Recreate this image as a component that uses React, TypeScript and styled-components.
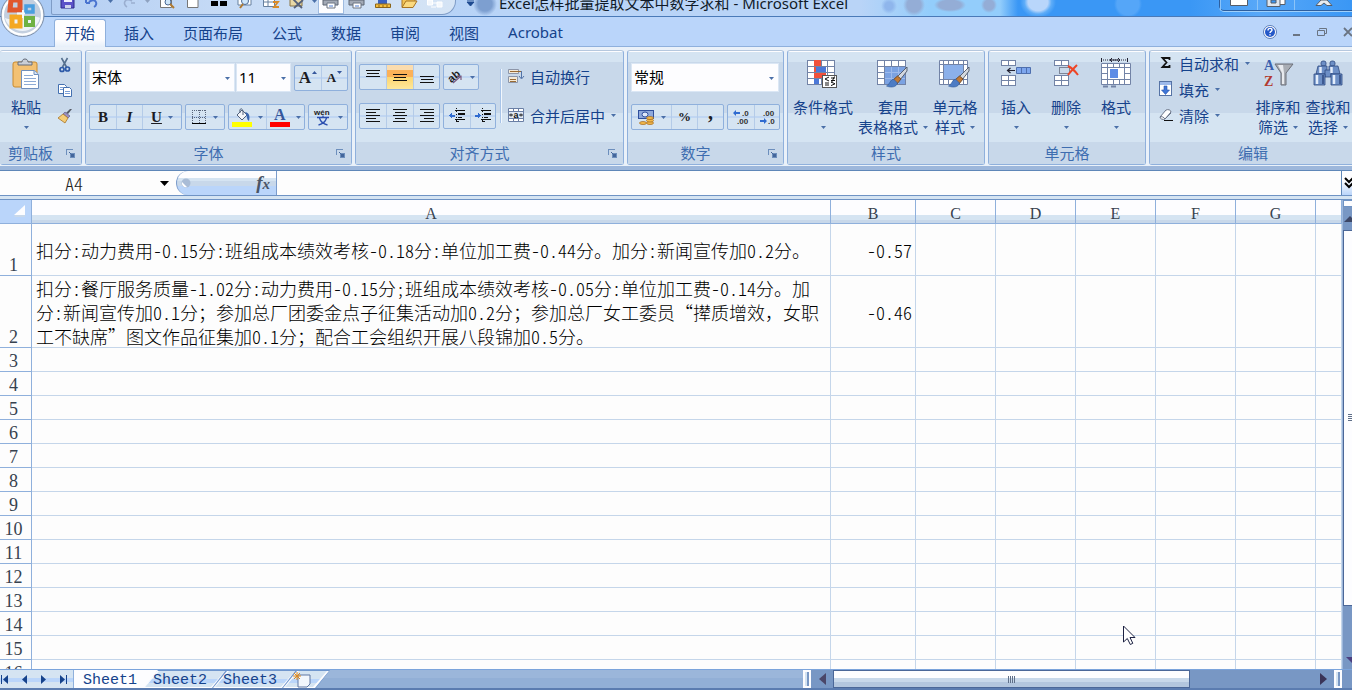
import React from "react";
import styled, { createGlobalStyle, css } from "styled-components";

const ui = `"Noto Sans", "Noto Sans CJK SC", sans-serif`;
const song = `"Noto Sans CJK SC", sans-serif`;
const navy = "#15428b";
const line = "#8fb0dc";
const light = "#d5e4f2";
const mid = "#c8d8ea";

const Global = createGlobalStyle`
  * { box-sizing: border-box; }
  html, body { margin: 0; }
  body { font-family: ${ui}; font-size: 15px; color: ${navy}; }
  button, select, input { font: inherit; color: inherit; margin: 0; padding: 0; border: 0; background: none; border-radius: 0; }
  svg { display: block; flex: none; overflow: visible; }
`;

const Window = styled.div`
  height: 100vh;
  display: flex;
  flex-direction: column;
  overflow: hidden;
  position: relative;
  background: ${light};
`;

/* ---------- title bar ---------- */
const TitleBar = styled.header`
  flex: none;
  height: 17px;
  padding-left: 51px;
  display: flex;
  align-items: flex-start;
  overflow: hidden;
  border-bottom: 1px solid #4a7ab8;
  background:
    radial-gradient(circle at 889px 6px, #8fb6ec 4px, transparent 8px),
    radial-gradient(circle at 914px 5px, #94add6 7px, transparent 11px),
    radial-gradient(ellipse 16px 7px at 950px 5px, #94add6 70%, transparent),
    radial-gradient(circle at 989px 5px, #94add6 5px, transparent 8px),
    radial-gradient(ellipse 18px 16px at 1038px 2px, #b9d6fb 55%, #5fadf8 75%, transparent),
    radial-gradient(circle at 1128px 4px, #55a6f8 11px, transparent 14px),
    radial-gradient(circle at 485px 4px, #7d9fd0 7px, transparent 12px),
    linear-gradient(90deg, #a9c9f3 0, #b9d4f7 500px, #b9d4f7 860px, #93cdfb 930px, #93cdfb 1000px, #3a97f5 1018px, #3a97f5 1190px, #58a8f8 1260px, #3a97f5 100%);
`;

const QuickAccess = styled.div`
  flex: none;
  width: 405px;
  height: 15px;
  padding-left: 2px;
  display: flex;
  border: 1px solid #7f9cc6;
  border-top: 0;
  border-radius: 0 0 14px 2px;
  background: linear-gradient(90deg, #b5cff3, #c8dcf6 50%, #d5e4f5);
`;

const QuickButton = styled.button<{ $w?: number; $on?: boolean }>`
  flex: none;
  width: ${(p) => p.$w ?? 26}px;
  height: 14px;
  display: flex;
  justify-content: center;
  align-items: flex-start;
  ${(p) => p.$on && css`background: #fdfdff; border: 1px solid #9fbbe0; border-top: 0;`}
`;

const MoreButton = styled.button`
  width: 28px;
  height: 14px;
  display: flex;
  justify-content: center;
`;

const DocTitle = styled.h1`
  margin: 0 0 0 15px;
  flex: 1;
  height: 16px;
  display: flex;
  align-items: flex-end;
  font-size: 15px;
  line-height: 26px;
  font-weight: 400;
  color: #101a28;
  white-space: nowrap;
`;

const WindowButtons = styled.div`
  flex: none;
  width: 133px;
  height: 11px;
  display: flex;
  border: 1px solid #2d5f9f;
  border-top: 0;
  border-right: 0;
  border-radius: 0 0 0 5px;
  box-shadow: 0 1px 0 #9fd0fb;
`;

const WindowButton = styled.button<{ $wide?: boolean }>`
  flex: ${(p) => (p.$wide ? 1 : "none")};
  width: 37px;
  display: flex;
  justify-content: center;
  border-left: 1px solid #8cc4f8;
`;

const Orb = styled.button`
  position: absolute;
  left: 0;
  top: 0;
  height: 38px;
  overflow: hidden;
`;

/* ---------- ribbon tabs ---------- */
const TabRow = styled.nav`
  flex: none;
  height: 30px;
  padding-left: 54px;
  display: flex;
  align-items: flex-end;
  background: #bad5fa;
  border-bottom: 1px solid ${line};
`;

const Tab = styled.button<{ $on?: boolean }>`
  height: 28px;
  padding: 0 10px 3px;
  margin-right: 7px;
  margin-bottom: -1px;
  border: 1px solid transparent;
  border-bottom: 0;
  border-radius: 3px 3px 0 0;
  white-space: nowrap;
  ${(p) => p.$on && css`background: linear-gradient(#fdfdff 70%, #e6eff9); border-color: ${line};`}
`;

const TabTools = styled.div`
  flex: 1;
  height: 28px;
  margin-right: -3px;
  display: flex;
  justify-content: flex-end;
  align-items: center;
  gap: 12px;
`;

const Tool = styled.button`
  width: 14px;
  height: 14px;
  display: flex;
  justify-content: center;
  align-items: center;
`;

/* ---------- ribbon ---------- */
const Ribbon = styled.section`
  flex: none;
  height: 119px;
  padding-top: 3px;
  display: flex;
  gap: 3px;
  background: #eaf1f9;
`;

const Group = styled.section<{ $w: number; $first?: boolean }>`
  flex: none;
  width: ${(p) => p.$w}px;
  height: 115px;
  display: flex;
  flex-direction: column;
  border: 1px solid ${line};
  border-left-width: ${(p) => (p.$first ? 0 : 1)}px;
  border-top-color: #b6c8de;
  border-radius: 3px;
  background: linear-gradient(#fdfdff 0 1px, ${light} 1px 11px, ${mid} 11px 62px, ${light} 62px);
`;

const GroupBody = styled.div<{ $pad?: string; $gap?: number; $column?: boolean }>`
  flex: 1;
  min-height: 0;
  display: flex;
  flex-direction: ${(p) => (p.$column ? "column" : "row")};
  gap: ${(p) => p.$gap ?? 0}px;
  padding: ${(p) => p.$pad ?? "6px 2px 0"};
`;

const GroupFoot = styled.footer`
  height: 22px;
  display: flex;
  align-items: center;
  background: ${mid};
  color: #3e6db0;
`;

const GroupName = styled.span`
  flex: 1;
  text-align: center;
  line-height: 22px;
`;

const Launcher = styled.button`
  width: 20px;
  height: 18px;
  padding-left: 5px;
`;

const Line = styled.div<{ $gap?: number; $h?: number }>`
  display: flex;
  align-items: center;
  gap: ${(p) => p.$gap ?? 4}px;
  height: ${(p) => (p.$h ? p.$h + "px" : "auto")};
`;

const Stack = styled.div<{ $gap?: number }>`
  display: flex;
  flex-direction: column;
  gap: ${(p) => p.$gap ?? 0}px;
`;

const Small = styled.button<{ $w?: number; $on?: boolean }>`
  width: ${(p) => p.$w ?? 26}px;
  display: flex;
  align-items: center;
  justify-content: center;
  gap: 6px;
  ${(p) => p.$on && css`background: linear-gradient(#fbdcae 0 5px, #fbb158 5px 12px, #fdd56e 12px, #fde89c);`}
`;

const Cluster = styled.div`
  display: flex;
  height: 26px;
  border: 1px solid ${line};
  border-radius: 2px;
  background: linear-gradient(${light} 0 11px, #c0d6f2 11px 13px, ${light} 13px);
  ${Small} + ${Small} { border-left: 1px solid #b4cbe8; }
`;

const Glyph = styled.span<{ $italic?: boolean; $under?: boolean; $size?: number; $raised?: boolean }>`
  font-family: "Liberation Serif", serif;
  font-weight: 700;
  font-size: ${(p) => p.$size ?? 15}px;
  line-height: 20px;
  padding-bottom: ${(p) => (p.$raised ? 10 : 0)}px;
  color: #1c1c22;
  font-style: ${(p) => (p.$italic ? "italic" : "normal")};
  text-decoration: ${(p) => (p.$under ? "underline" : "none")};
`;

const SizeMark = styled(Small)`
  gap: 1px;
  svg { align-self: flex-start; margin-top: 5px; }
`;

const PickerBox = styled.div<{ $w: number }>`
  position: relative;
  width: ${(p) => p.$w}px;
  height: 29px;
  background: #fdfdff;
  border: 1px solid #dbe7f5;
  select {
    appearance: none;
    width: 100%;
    height: 100%;
    padding: 0 0 2px 2px;
    color: #000;
    outline: 0;
  }
  svg { position: absolute; right: 4px; top: 13px; pointer-events: none; }
`;

const Divider = styled.div`
  width: 1px;
  height: 54px;
  margin: 5px 7px 0 4px;
  background: #a8c4e8;
  box-shadow: 1px 0 0 #f2f7fd;
`;

const TextButton = styled.button`
  height: 26px;
  display: flex;
  align-items: center;
  gap: 6px;
  padding-bottom: 2px;
  white-space: nowrap;
`;

const Big = styled.button<{ $w: number }>`
  flex: none;
  width: ${(p) => p.$w}px;
  height: 84px;
  display: flex;
  flex-direction: column;
  align-items: center;
  line-height: 20px;
  white-space: nowrap;
  > svg:first-child { margin-bottom: 7px; }
`;

const BigSecond = styled.span`
  height: 20px;
  display: flex;
  align-items: center;
  gap: 5px;
`;

/* ---------- formula bar ---------- */
const FormulaBar = styled.div`
  flex: none;
  height: 33px;
  display: flex;
  background: #fdfdfd;
  border-top: 4px solid #9db7db;
  border-bottom: 3px solid ${light};
  box-shadow: inset 0 1px 0 #5f87b8, inset 0 -1px 0 #6f93c4;
`;

const NameBox = styled.input`
  width: 148px;
  height: 26px;
  text-align: center;
  font-family: ${song};
  font-feature-settings: "hwid";
  font-size: 18px;
  font-weight: 300;
  color: #222;
  outline: 0;
`;

const NameArrow = styled.button`
  width: 28px;
  display: flex;
  align-items: center;
  justify-content: center;
  padding-left: 4px;
`;

const FxPill = styled.button`
  width: 101px;
  margin: 1px 0;
  padding: 0 6px 0 4px;
  display: flex;
  align-items: center;
  justify-content: space-between;
  border: 1px solid #7b9ccb;
  border-width: 0 1px 0 1px;
  border-radius: 12px 0 0 12px;
  background: linear-gradient(#fdfdff 0 7px, ${light} 7px 10px, ${mid} 10px 15px, #bad5fa 15px);
  font: italic 700 19px "Liberation Serif", serif;
  color: #4a5566;
  small { font-size: 15px; }
`;

const FormulaInput = styled.input`
  flex: 1;
  min-width: 0;
  height: 26px;
  padding: 0 6px;
  outline: 0;
`;

const Expand = styled.button`
  width: 11px;
  margin: 1px 0;
  overflow: hidden;
  border-left: 1px solid #5f87b8;
  background: linear-gradient(#fdfdff 40%, #bad5fa);
`;

/* ---------- grid ---------- */
const Workspace = styled.main`
  flex: 1;
  min-height: 0;
  display: flex;
  position: relative;
  border-top: 1px solid #6f93c4;
  background: #fdfdfd;
`;

const GridClip = styled.div`
  flex: 1;
  min-width: 0;
  overflow: hidden;
`;

const Grid = styled.table`
  width: 100%;
  table-layout: fixed;
  border-collapse: separate;
  border-spacing: 0;
  font-family: ${song};
  font-size: 18px;
  font-weight: 300;
  color: #000;
`;

const ColHead = styled.th`
  height: 24px;
  padding: 3px 0 0;
  line-height: 19px;
  font-family: "Liberation Serif", serif;
  font-size: 16px;
  font-weight: 400;
  color: #37424f;
  border-right: 1px solid ${line};
  border-bottom: 1px solid ${line};
  background: linear-gradient(#fdfdff 0 15px, ${light} 15px 20px, ${mid} 20px);
`;

const Corner = styled.th`
  padding: 4px 4px 4px 14px;
  background: #bad5fa;
  border-right: 1px solid ${line};
  border-bottom: 1px solid ${line};
`;

const RowHead = styled.th`
  padding: 0 4px 0 0;
  vertical-align: bottom;
  line-height: 20px;
  font-family: "Liberation Serif", serif;
  font-weight: 400;
  color: #37424f;
  border-right: 1px solid ${line};
  border-bottom: 1px solid ${line};
`;

const Cell = styled.td<{ $right?: boolean }>`
  padding: ${(p) => (p.$right ? "0 4px 0 0" : "0 8px 0 4px")};
  text-align: ${(p) => (p.$right ? "right" : "left")};
  line-height: 24px;
  vertical-align: middle;
  word-break: break-all;
  text-spacing-trim: space-all;
  font-feature-settings: "hwid";
  box-shadow: inset -1px -1px 0 #c5d6ea;
`;

/* keeps a full-width comma from being narrowed with the digits around it */
const Wide = styled.span`
  font-feature-settings: normal;
`;

const VScroll = styled.div`
  flex: none;
  width: 10px;
  display: flex;
  flex-direction: column;
  overflow: hidden;
  background: #7897c4;
  border-left: 1px solid #9db7db;
`;

const VSplit = styled.div`
  height: 7px;
  margin-bottom: 1px;
  background: #fdfdff;
  border: 1px solid #6f93c4;
  border-width: 1px 0 1px 1px;
`;

const VThumb = styled.div`
  flex: 1;
  display: flex;
  align-items: center;
  border: 1px solid #4b6798;
  border-right: 0;
  background: #fdfdff;
`;

const ScrollArrow = styled.button<{ $w?: number; $h?: number }>`
  flex: none;
  width: ${(p) => p.$w ?? 12}px;
  height: ${(p) => p.$h ?? 18}px;
  display: flex;
  align-items: center;
  justify-content: center;
`;

const VFiller = styled.div`
  height: 45px;
`;

const Pointer = styled.svg`
  position: absolute;
  left: 83%;
  top: 425px;
`;

/* ---------- sheet tabs ---------- */
const BottomBar = styled.footer`
  flex: none;
  height: 21px;
  display: flex;
  background: linear-gradient(#9bb6da 0 8px, #92afd6 8px);
  border-top: 1px solid #7ba4dc;
  border-bottom: 2px solid #5b7cb0;
`;

const SheetNav = styled.div`
  width: 74px;
  display: flex;
  align-items: center;
  gap: 10px;
  padding-left: 1px;
  background: linear-gradient(${light} 0 8px, #bad5fa 8px 12px, ${light} 12px);
  border-right: 1px solid ${line};
`;

const slant = "polygon(14px 0, 100% 0, calc(100% - 14px) 100%, 0 100%)";

const SheetTab = styled.button<{ $on?: boolean; $w?: number }>`
  position: relative;
  isolation: isolate;
  flex: none;
  width: ${(p) => p.$w ?? 86}px;
  margin-left: ${(p) => (p.$on ? 0 : -16)}px;
  padding: 2px 0 0 ${(p) => (p.$on ? 9 : 11)}px;
  display: flex;
  align-items: center;
  z-index: ${(p) => (p.$on ? 1 : 0)};
  font-family: "Liberation Mono", monospace;
  font-size: 15px;
  background: ${(p) => (p.$on ? "#fdfdff" : "#6f96cd")};
  clip-path: ${(p) => (p.$on ? "polygon(0 0, 100% 0, calc(100% - 14px) 100%, 0 100%)" : slant)};
  ${(p) =>
    !p.$on &&
    css`
      &::before, &::after { content: ""; position: absolute; z-index: -1; clip-path: ${slant}; }
      &::before { inset: 1px 1px 0 1px; background: #fdfdff; }
      &::after { inset: 1px 3px 1px 3px; background: linear-gradient(${light} 0 8px, #bad5fa 8px 12px, ${light} 12px); }
    `}
`;

const HScroll = styled.div`
  width: 549px;
  margin-left: auto;
  display: flex;
  align-items: stretch;
  background: #7897c4;
`;

const Splitter = styled.div`
  width: 8px;
  border: 2px solid #fdfdff;
  background: #7897c4;
  box-shadow: inset 2px 0 0 ${light};
`;

const HTrack = styled.div`
  flex: 1;
  display: flex;
`;

const HThumb = styled.div`
  width: 357px;
  display: flex;
  align-items: center;
  justify-content: center;
  gap: 1px;
  border: 1px solid #4b6798;
  background: linear-gradient(#fdfdff 0 7px, ${mid} 7px 11px, #b3c6de 11px);
  i { width: 1px; height: 7px; background: #5f6f88; }
`;

/* ---------- icons ---------- */
const Caret = ({ color = "#4a6fa8" }: { color?: string }) => (
  <svg width="5" height="3"><path d="M0 0h5L2.500 3z" fill={color} /></svg>
);

const Rows = ({ xs, y = 0 }: { xs: [number, number][]; y?: number }) => (
  <svg width="16" height="16" stroke="#111" strokeWidth="1" shapeRendering="crispEdges">
    {xs.map(([a, b], i) => <path key={i} d={`M${a} ${y + 2.5 + i * 3}H${b}`} />)}
  </svg>
);

const LauncherIcon = () => (
  <svg width="9" height="9" fill="none" stroke="#6d8fbd" shapeRendering="crispEdges">
    <path d="M.5 6V.5H7" /><path d="M4.500 4.500h4v4h-4z" fill="#44669b" /><path d="M3 3l3 3" stroke="#44669b" />
  </svg>
);

const IndentIcon = ({ out }: { out?: boolean }) => (
  <svg width="17" height="16" shapeRendering="crispEdges">
    <path d="M6 2.500h10M9 5.500h7M9 6.500h7M9 9.500h4M6 11.500h10M7 13.500h3" stroke="#111" />
    <path d="M7.500 0v15" stroke="#111" strokeDasharray="1 2" />
    {out ? <path d="M0 7.500L3 4.500v2h3v2H3v2z" fill="#2f6bd0" /> : <path d="M6 7.500L3 4.500v2H0v2h3v2z" fill="#2f6bd0" />}
  </svg>
);

const DecimalIcon = ({ more }: { more?: boolean }) => (
  <svg width="17" height="16">
    <g fontFamily="Liberation Sans, sans-serif" fontSize="8" fontWeight="700" fill="#333">
      <text x={more ? 9 : 4} y="7">{more ? ".0" : ".00"}</text>
      <text x={more ? 4 : 9} y="15">{more ? ".00" : ".0"}</text>
    </g>
    {more
      ? <path d="M0 4l3-3v2h4v2H3v2z" fill="#2f6bd0" />
      : <path d="M8 12l-3-3v2H1v2h4v2z" fill="#2f6bd0" />}
  </svg>
);

const SheetGrid = ({ w, h, cols, rows }: { w: number; h: number; cols: number; rows: number }) => (
  <g stroke="#7283a6" fill="#fff" shapeRendering="crispEdges">
    <rect x=".5" y="2.500" width={w} height={h} />
    {Array.from({ length: cols - 1 }, (_, i) => <path key={"c" + i} d={`M${Math.round((w / cols) * (i + 1)) + 0.5} 2.500v${h}`} />)}
    {Array.from({ length: rows - 1 }, (_, i) => <path key={"r" + i} d={`M.5 ${Math.round((h / rows) * (i + 1)) + 2.5}h${w}`} />)}
  </g>
);

const Brush = () => (
  <g>
    <path d="M30 9L20 19l3 3 7-9z" fill="#d3d8df" stroke="#4d5563" strokeWidth=".9" />
    <path d="M20.500 18l-4.500 4 4 4 4-5z" fill="#c27a35" stroke="#6c4521" strokeWidth=".9" />
    <path d="M16.500 21c-4 1-3 5-7 7 5 2 10 1 11-3z" fill="#4d7cc4" stroke="#2c5797" strokeWidth=".6" />
  </g>
);

const PasteIcon = () => (
  <svg width="28" height="32">
    <rect x="1" y="4" width="24" height="25" rx="2" fill="#f3c173" stroke="#c98a2e" />
    <path d="M6 7V4h4c0-4 6-4 6 0h4v3z" fill="#c9ced6" stroke="#646c7a" />
    <path d="M9.500 12.500h13l4 4v14h-17z" fill="#fff" stroke="#6f8fbd" />
    <path d="M12 17.500h9M12 20.500h12M12 23.500h12M12 26.500h12" stroke="#8eabd5" />
    <path d="M22 12.500v4h4.500" fill="#d9e5f5" stroke="#6f8fbd" />
  </svg>
);

const CutIcon = () => (
  <svg width="14" height="15" fill="none">
    <path d="M3.500 0l5 9M9.500 0l-5 9" stroke="#56708f" strokeWidth="1.600" />
    <circle cx="4" cy="11.500" r="2" stroke="#2d5aa8" strokeWidth="1.700" /><circle cx="9.500" cy="11" r="2" stroke="#2d5aa8" strokeWidth="1.700" />
  </svg>
);

const CopyIcon = () => (
  <svg width="16" height="15" fill="#fff" stroke="#4470b0">
    <path d="M1.500 1.500h6l2 2v7h-8z" /><path d="M6.500 4.500h6l2 2v7h-8z" /><path d="M8 8.500h5M8 10.500h5M3 4.500h3M3 6.500h3" stroke="#7ba0d8" />
  </svg>
);

const PainterIcon = () => (
  <svg width="16" height="16">
    <path d="M15 1l-4 5-2-1 4-4z" fill="#555a66" /><path d="M8 4l5 4-2 2-5-4z" fill="#9a8fc0" stroke="#57507c" strokeWidth=".6" />
    <path d="M6 6l5 4-3 5-7-5z" fill="#f5cd76" stroke="#a8752a" strokeWidth=".8" />
  </svg>
);

const FillIcon = () => (
  <svg width="20" height="19">
    <path d="M5 7l5-5 5 5-5 5z" fill="#f4f6fa" stroke="#51617b" /><path d="M8 5c-1-6 3-5 3-1v3" fill="none" stroke="#51617b" />
    <path d="M13 4c5 1 5 5 4 9-3-2-1-4-4-9z" fill="#3a66b0" />
    <path d="M0 14h20v5H0z" fill="#ff0" />
  </svg>
);

const FontColorIcon = () => (
  <svg width="20" height="20">
    <text x="4" y="13" fontFamily="Liberation Serif, serif" fontWeight="700" fontSize="16" fill="#35579c">A</text>
    <path d="M0 15h20v5H0z" fill="#f00" />
  </svg>
);

const PhoneticIcon = () => (
  <svg width="18" height="18">
    <text x="0" y="7" fontFamily="Liberation Sans, sans-serif" fontWeight="700" fontSize="8" fill="#222">wén</text>
    <path d="M3 9.500h12M9 7.500v2M5.500 10c1 4 4 6 8 7M12.500 10c-1 4-4 6-8 7" fill="none" stroke="#2b4fb0" strokeWidth="1.300" />
  </svg>
);

const BorderIcon = () => (
  <svg width="15" height="15" shapeRendering="crispEdges">
    <path d="M.5 0v13M7.500 0v13M13.500 0v13M0 .5h14M0 7.500h14" stroke="#59657a" strokeDasharray="1 1" /><path d="M0 13.500h14" stroke="#000" />
  </svg>
);

const OrientIcon = () => (
  <svg width="17" height="16">
    <text x="1" y="11" transform="rotate(-40 7 8)" fontFamily="Liberation Sans, sans-serif" fontWeight="700" fontSize="11" fill="#222">ab</text>
    <path d="M6 14l8-7M14 11V7h-4" fill="none" stroke="#7a5a7e" strokeWidth="1.200" />
  </svg>
);

const WrapIcon = () => (
  <svg width="16" height="16">
    <path d="M.5 1.500h10v4H.5zM.5 8.500h9v6H.5z" fill="#f4ead8" stroke="#8c95a8" />
    <path d="M2 3.500h11M2 11.500h6M2 13.500h6" stroke="#9a6b35" /><path d="M13.500 3v7M11 8l2.500 3L16 8" fill="none" stroke="#5273a8" />
  </svg>
);

const MergeIcon = () => (
  <svg width="16" height="16">
    <path d="M.5 1.500h15v13H.5z" fill="#fff" stroke="#6a7fa5" /><path d="M.5 4.500h15M.5 11.500h15M5.500 1.500v3M10.500 1.500v3M5.500 11.500v3M10.500 11.500v3" stroke="#6a7fa5" />
    <path d="M1 5h14v6H1z" fill="#dfe8f5" /><path d="M1 8h4M3 6.500v3M11 8h4M13 6.500v3" stroke="#222" />
    <text x="5.500" y="10.500" fontFamily="Liberation Sans, sans-serif" fontWeight="700" fontSize="9" fill="#111">a</text>
  </svg>
);

const MoneyIcon = () => (
  <svg width="17" height="17">
    <rect x=".5" y="1.500" width="15" height="8" fill="#8fa9dc" stroke="#2f4f9c" /><ellipse cx="7" cy="5.500" rx="3" ry="2.500" fill="#dfe8fa" stroke="#2f4f9c" />
    <g fill="#f2b94b" stroke="#a0651c" strokeWidth=".7"><ellipse cx="12" cy="14" rx="3.500" ry="1.500" /><ellipse cx="12" cy="11.500" rx="3.500" ry="1.500" /><ellipse cx="12" cy="9" rx="3.500" ry="1.500" /><ellipse cx="5" cy="14" rx="3.500" ry="1.500" /></g>
  </svg>
);

const CondIcon = () => (
  <svg width="32" height="32">
    <SheetGrid w={27} h={24} cols={4} rows={4} />
    <g shapeRendering="crispEdges">
      <path d="M7 2h7v6H7z" fill="#f0503c" /><path d="M7 15h12v5H7z" fill="#f0503c" /><path d="M7 9h5v5H7z" fill="#f0503c" />
      <path d="M9 9h10v5H9zM7 21h5v5H7z" fill="#4c78d8" />
      <rect x="15.500" y="17.500" width="14" height="12" fill="#fff" stroke="#555" />
    </g>
    <path d="M22 19l-4 2 4 2M18 25h4M18 27h4M24 20h4M24 22.500h4M27.500 18.500l-3 6M24 24l4 1.800-4 1.800" fill="none" stroke="#111" />
  </svg>
);

const TableStyleIcon = () => (
  <svg width="32" height="32">
    <SheetGrid w={28} h={24} cols={4} rows={4} />
    <path d="M8 9h20v17H8z" fill="#7ba2e2" /><path d="M14.500 9v17M21.500 9v17M8 14.500h20M8 20.500h20" stroke="#9dbbed" />
    <Brush />
  </svg>
);

const CellStyleIcon = () => (
  <svg width="32" height="32">
    <path d="M.5 2.500h28v24H.5z" fill="#fff" stroke="#7283a6" />
    <path d="M4.500 2.500v24M24.500 2.500v24M.5 6.500h28M.5 21.500h28M9.500 2.500v4M14.500 2.500v4M19.500 2.500v4M9.500 21.500v5M14.500 21.500v5M.5 14.500h4M24.500 14.500h4" stroke="#7283a6" />
    <path d="M5 7h19v14H5z" fill="#8bb0ea" />
    <Brush />
  </svg>
);

const HalfGrids = () => (
  <g fill="#fff" stroke="#7283a6" shapeRendering="crispEdges">
    <path d="M1.500 2.500h14v5h-14zM8.500 2.500v5M1.500 17.500h14v10h-14zM8.500 17.500v10M1.500 22.500h14" />
  </g>
);

const InsertIcon = () => (
  <svg width="32" height="32">
    <HalfGrids />
    <path d="M16.500 9.500h14v6h-14z" fill="#7da6ee" stroke="#4e6fae" /><path d="M21.500 9.500v6M26.500 9.500v6" stroke="#4e6fae" />
    <path d="M15 12.500H8M10.500 10L7.500 12.500l3 2.500" fill="none" stroke="#223" strokeWidth="1.200" />
  </svg>
);

const DeleteIcon = () => (
  <svg width="32" height="32">
    <g transform="translate(3 0)"><HalfGrids /></g>
    <path d="M9.500 9.500h10v6h-10z" fill="none" stroke="#334" strokeDasharray="1 1" />
    <path d="M18 8c4 2 7 5 10 9M27 7c-3 3-6 6-9 10" fill="none" stroke="#ee4526" strokeWidth="2" />
  </svg>
);

const FormatIcon = () => (
  <svg width="32" height="32">
    <path d="M1.500 0v4M27.500 0v4" stroke="#223" /><path d="M3 2h24" stroke="#223" strokeDasharray="1 1" /><path d="M10 2h10M12 0l-2 2 2 2M18 0l2 2-2 2" fill="none" stroke="#223" />
    <path d="M1.500 5.500h29v21h-29z" fill="#fff" stroke="#7283a6" /><path d="M7.500 5.500v21M24.500 5.500v21M1.500 9.500h29M1.500 21.500h29M1.500 15.500h6M24.500 15.500h6M13.500 5.500v4M19.500 5.500v4M13.500 21.500v5M19.500 21.500v5" stroke="#7283a6" />
    <path d="M10 11h8v9h-8z" fill="#5d8ce6" /><path d="M3 28.500h5M11 28.500h5" stroke="#7283a6" strokeWidth="2" />
  </svg>
);

const SortIcon = () => (
  <svg width="32" height="32">
    <g fontFamily="Liberation Serif, serif" fontWeight="700" fontSize="14"><text x="2" y="12" fill="#3a5fae">A</text><text x="2" y="28" fill="#b23a30">Z</text></g>
    <path d="M13 6h18l-7 9v12h-5V15z" fill="#a9adb4" stroke="#6b6f78" /><path d="M16 7h5l1 8v11h-2V15z" fill="#e8eaee" />
  </svg>
);

const BinocularsIcon = () => (
  <svg width="32" height="32" fill="#6d8fc6" stroke="#2f4a80" strokeWidth=".8">
    <rect x="9" y="3" width="5" height="5" rx="2" /><rect x="18" y="3" width="5" height="5" rx="2" />
    <path d="M6 8h9v8H4zM17 8h9l2 8H17z" /><path d="M13 12h6v7h-6z" /><path d="M2 16h11v11H2zM19 16h11v11H19z" />
    <path d="M5 17v9M22 17v9M8.500 9v6M19.500 9v6" stroke="#e3edfb" strokeWidth="2.500" /><path d="M11 17v9M28 17v9" stroke="#2f4a80" strokeWidth="1.500" />
  </svg>
);

const SigmaIcon = () => (
  <svg width="14" height="14"><path d="M10.500 4V2H3.500l4 4.500-4 4.500h7V9" fill="none" stroke="#111" strokeWidth="1.800" /></svg>
);

const FillDownIcon = () => (
  <svg width="14" height="16"><rect x=".5" y=".5" width="12" height="14" fill="#fff" stroke="#5673a5" /><path d="M1 1h11v3H1z" fill="#9db9ea" /><path d="M5 5h3v4h2.500l-4 4.500-4-4.500H5z" fill="#3f76d8" stroke="#2653a8" strokeWidth=".6" /></svg>
);

const EraserIcon = () => (
  <svg width="14" height="14"><path d="M1 9l6-7c2-1 5 0 5 2l-6 7c-2 1-5 0-5-2z" fill="#fff" stroke="#6a7488" /><path d="M1 9c1-1 4 0 5 2l6-6" fill="none" stroke="#6a7488" /><path d="M5 12.500h9" stroke="#111" /></svg>
);

const HelpIcon = () => (
  <svg width="14" height="14"><circle cx="7" cy="7" r="6.500" fill="#fff" stroke="#5a7db8" /><circle cx="7" cy="7" r="5" fill="#2458c8" /><path d="M5 5.500c0-3 4-2.500 4-.5 0 1.500-2 1.300-2 3M7 9.300v1.300" stroke="#fff" strokeWidth="1.400" fill="none" /></svg>
);

const OrbIcon = () => (
  <svg width="46" height="38">
    <circle cx="22.500" cy="15" r="21.500" fill="#dfe6ef" stroke="#7d8fa9" />
    <circle cx="22.500" cy="15" r="19.500" fill="#c3cfdf" stroke="#fff" strokeWidth="2" />
    <path d="M5 18a18 17 0 0 0 35 0c-8-4-26 4-35 0z" fill="#eef3f9" />
    <g fill="none" strokeWidth="5">
      <path d="M11 0H20V10H10z" stroke="#e0562c" /><path d="M26 6h7v6h-7z" stroke="#4a9fe0" strokeWidth="3.500" />
      <path d="M12 17h8v9h-8z" stroke="#f4a822" /><path d="M26 18h7v7h-7z" stroke="#6fb244" strokeWidth="4" />
    </g>
    <path d="M17 13.500h8M23 10v8" stroke="#f7fafc" strokeWidth="2" />
  </svg>
);

const quick: Record<string, React.ReactNode> = {
  保存: <svg width="15" height="9"><path d="M1 -5h13V8H1z" fill="#5b52c8" stroke="#2f2a8a" /><path d="M4 -3h8v5H4z" fill="#eef" /><path d="M5 5h6v3H5z" fill="#cfd4ec" /></svg>,
  撤销: <svg width="14" height="8"><path d="M1 3h4M1 0v3M4 2c6-5 10 2 5 5" fill="none" stroke="#4a74d0" strokeWidth="2" /></svg>,
  恢复: <svg width="14" height="8"><path d="M13 3H9M10 1c-7-4-10 3-5 6" fill="none" stroke="#9aaed0" strokeWidth="1.600" /></svg>,
  打印预览: <svg width="15" height="9"><path d="M.5 -4h11v11.500H.5z" fill="#fff" stroke="#777" /><circle cx="8" cy="2" r="3" fill="#cfe6fa" stroke="#4a6a96" /><path d="M10 4l4 4" stroke="#b07a30" strokeWidth="2" /></svg>,
  新建: <svg width="12" height="9"><path d="M.5 -4h10.500V7.500H.5z" fill="#fff" stroke="#777" /></svg>,
  冻结: <svg width="16" height="7"><path d="M0 1h7v5H0zM9 1h7v5H9z" fill="#000" /></svg>,
  查找: <svg width="16" height="9"><path d="M1 -2h13v7H1z" fill="#fff" stroke="#67809f" /><circle cx="8" cy="1" r="3.500" fill="#cfe6fa" stroke="#4a6a96" /><path d="M6 4L3 8" stroke="#b07a30" strokeWidth="2" /></svg>,
  表格: <svg width="16" height="9"><path d="M.5 -2h11v8.500H.5zM.5 2h11M5 -2v8" fill="#fff" stroke="#67809f" /><path d="M10 2h5l-4 5h5" fill="none" stroke="#d98b28" strokeWidth="1.800" /></svg>,
  工具: <svg width="17" height="9"><path d="M1 -2h12v8H1z" fill="#e8d8a6" stroke="#8a7444" /><path d="M4 -1l9 9M14 0L5 8" stroke="#55617a" strokeWidth="1.800" /></svg>,
  快速打印: <svg width="18" height="9"><path d="M1 0h15v5H1z" fill="#a2a9b5" stroke="#5c6472" /><path d="M5 3h8v5H5z" fill="#fff" stroke="#6c7482" /><path d="M7 6h4" stroke="#4c7ad0" /></svg>,
  打印: <svg width="18" height="9"><path d="M1 0h15v5H1z" fill="#a2a9b5" stroke="#5c6472" /><path d="M5 3h8v5H5z" fill="#fff" stroke="#6c7482" /><path d="M7 6h4" stroke="#4c7ad0" /></svg>,
  标尺: <svg width="16" height="9"><path d="M3 0h9v4H3z" fill="#3b62c0" /><path d="M.5 4h15v3.500H.5z" fill="#f6bf3c" stroke="#8b6418" /><path d="M4 5v2M8 5v2M12 5v2" stroke="#8b6418" /></svg>,
  打开: <svg width="17" height="9"><path d="M1 7V-2h13v3" fill="#f3c456" stroke="#a87422" /><path d="M1 7.500L5 1h11l-4 6.500z" fill="#fbd97e" stroke="#a87422" /></svg>,
  共享: <svg width="16" height="9"><path d="M.5 0h5v5h-5zM10 2h5v5h-5zM5 3h5M4 7h5" fill="#f4f8fd" stroke="#fff" /></svg>,
};

/* ---------- content ---------- */
const tabs = ["开始", "插入", "页面布局", "公式", "数据", "审阅", "视图", "Acrobat"];
const columns = ["A", "B", "C", "D", "E", "F", "G", ""];
const data: Record<number, [React.ReactNode, string]> = {
  1: ["扣分:动力费用-0.15分:班组成本绩效考核-0.18分:单位加工费-0.44分。加分:新闻宣传加0.2分。", "-0.57"],
  2: [
    <>
      扣分:餐厅服务质量-1.02分:动力费用-0.15分;班组成本绩效考核-0.05分:单位加工费-0.14分。加分:新闻宣传加0.1分；参加总厂团委金点子征集活动加0.2分；参加总厂女工委员“撵质增效<Wide>{"\uFF0C"}</Wide>女职工不缺席”图文作品征集加0.1分；配合工会组织开展八段锦加0.5分。
    </>,
    "-0.46",
  ],
};

const heights: Record<number, number> = { 1: 52, 2: 72 };

const Picker = ({ label, value, w }: { label: string; value: string; w: number }) => (
  <PickerBox $w={w}>
    <select aria-label={label} defaultValue={value}><option>{value}</option></select>
    <Caret />
  </PickerBox>
);

const Foot = ({ name, launcher }: { name: string; launcher?: boolean }) => (
  <GroupFoot>
    <GroupName>{name}</GroupName>
    {launcher && <Launcher aria-label={`${name}设置`}><LauncherIcon /></Launcher>}
  </GroupFoot>
);

const BigButton = ({ icon, top, bottom, w }: { icon: React.ReactNode; top: string; bottom?: string; w: number }) => (
  <Big $w={w}>
    {icon}
    <span>{top}</span>
    <BigSecond>{bottom}<Caret /></BigSecond>
  </Big>
);

const q = (name: string, w?: number, on?: boolean) => (
  <QuickButton aria-label={name} $w={w} $on={on}>{quick[name]}</QuickButton>
);

const Triangle = ({ dir, bar }: { dir: "l" | "r"; bar?: boolean }) => (
  <svg width="9" height="9" fill={navy}>
    {dir === "l" ? <path d="M7 0v9L2 4.500z" /> : <path d="M2 0v9l5-4.500z" />}
    {bar && <path d={dir === "l" ? "M0 0h1v9H0z" : "M8 0h1v9H8z"} />}
  </svg>
);

export default function App() {
  return (
    <Window lang="zh-CN">
      <Global />
      <TitleBar>
        <QuickAccess>
          {q("保存")}{q("撤销", 24)}
          <QuickButton aria-label="撤销列表" $w={13}><Caret /></QuickButton>
          {q("恢复", 24)}
          <QuickButton aria-label="恢复列表" $w={13}><Caret color="#8ea2c0" /></QuickButton>
          {q("打印预览")}{q("新建")}{q("冻结")}{q("查找")}{q("表格")}{q("工具")}
          <QuickButton aria-label="工具列表" $w={8}><Caret /></QuickButton>
          {q("快速打印", 26, true)}{q("打印")}{q("标尺")}{q("打开")}{q("共享")}
        </QuickAccess>
        <MoreButton aria-label="自定义快速访问工具栏">
          <svg width="7" height="7"><path d="M0 0h7M0 2h7L3.500 6z" fill="#1e4a90" stroke="#1e4a90" /></svg>
        </MoreButton>
        <DocTitle>Excel怎样批量提取文本中数字求和 - Microsoft Excel</DocTitle>
        <WindowButtons>
          <WindowButton aria-label="最小化"><svg width="18" height="7"><path d="M.5 -1h17v6.500H.5z" fill="#fff" stroke="#555d69" /></svg></WindowButton>
          <WindowButton aria-label="还原"><svg width="20" height="8"><path d="M6 -2h13v6.500H6z" fill="#fff" stroke="#555d69" /><path d="M1 -2h13v8.500H1z" fill="#dfe6ee" stroke="#555d69" /><path d="M5 0h5v3H5z" fill="#3a97f5" stroke="#555d69" /></svg></WindowButton>
          <WindowButton aria-label="关闭" $wide><svg width="18" height="7"><path d="M1 5.500L6 0h6l5 5.500h-5L9 3 6 5.500z" fill="#e8ecf1" stroke="#555d69" /></svg></WindowButton>
        </WindowButtons>
      </TitleBar>
      <TabRow aria-label="功能区">
        {tabs.map((t, i) => <Tab key={t} $on={i === 0}>{t}</Tab>)}
        <TabTools>
          <Tool aria-label="帮助"><HelpIcon /></Tool>
          <Tool aria-label="最小化工作簿"><svg width="7" height="8"><path d="M0 6h7v2H0z" fill="#6a7482" /></svg></Tool>
          <Tool aria-label="还原工作簿"><svg width="10" height="8" fill="none" stroke="#6a7482"><path d="M2.500 1.500V.5h7v5h-2M.5 2.500h7v5h-7z" /></svg></Tool>
          <Tool aria-label="关闭工作簿"><svg width="8" height="8"><path d="M0 0l8 8M8 0L0 8" stroke="#6a7482" strokeWidth="1.800" /></svg></Tool>
        </TabTools>
      </TabRow>
      <Orb aria-label="Office 按钮"><OrbIcon /></Orb>

      <Ribbon>
        <Group $w={82} $first>
          <GroupBody $pad="7px 0 0">
            <BigButton icon={<PasteIcon />} top="粘贴" w={52} />
            <Stack $gap={10}>
              <Small aria-label="剪切"><CutIcon /></Small>
              <Small aria-label="复制"><CopyIcon /></Small>
              <Small aria-label="格式刷"><PainterIcon /></Small>
            </Stack>
          </GroupBody>
          <Foot name="剪贴板" launcher />
        </Group>

        <Group $w={267}>
          <GroupBody $column $gap={12} $pad="12px 2px 0 3px">
            <Line $h={29} $gap={3}>
              <Line $gap={1}>
                <Picker label="字体" value="宋体" w={146} />
                <Picker label="字号" value="11" w={55} />
              </Line>
              <Cluster>
                <SizeMark aria-label="增大字号"><Glyph $size={17}>A</Glyph><svg width="5" height="3"><path d="M0 3h5L2.500 0z" fill="#35579c" /></svg></SizeMark>
                <SizeMark aria-label="减小字号"><Glyph $size={13}>A</Glyph><svg width="5" height="3"><path d="M0 0h5L2.500 3z" fill="#35579c" /></svg></SizeMark>
              </Cluster>
            </Line>
            <Line $gap={3}>
              <Cluster>
                <Small aria-label="加粗"><Glyph>B</Glyph></Small>
                <Small aria-label="倾斜"><Glyph $italic>I</Glyph></Small>
                <Small aria-label="下划线" $w={39}><Glyph $under>U</Glyph><Caret /></Small>
              </Cluster>
              <Cluster><Small aria-label="边框" $w={38}><BorderIcon /><Caret /></Small></Cluster>
              <Cluster>
                <Small aria-label="填充颜色" $w={37}><FillIcon /><Caret /></Small>
                <Small aria-label="字体颜色" $w={38}><FontColorIcon /><Caret /></Small>
              </Cluster>
              <Cluster><Small aria-label="拼音" $w={38}><PhoneticIcon /><Caret /></Small></Cluster>
            </Line>
          </GroupBody>
          <Foot name="字体" launcher />
        </Group>

        <Group $w={269}>
          <GroupBody $pad="13px 3px 0">
            <Stack $gap={13}>
              <Line $gap={3}>
                <Cluster>
                  <Small aria-label="顶端对齐"><Rows xs={[[1, 15], [2, 14], [1, 15]]} y={-1} /></Small>
                  <Small aria-label="垂直居中" $w={27} $on><Rows xs={[[1, 15], [2, 14], [1, 15]]} y={3} /></Small>
                  <Small aria-label="底端对齐"><Rows xs={[[1, 15], [2, 14], [1, 15]]} y={5} /></Small>
                </Cluster>
                <Cluster><Small aria-label="方向" $w={34}><OrientIcon /><Caret /></Small></Cluster>
              </Line>
              <Line $gap={3}>
                <Cluster>
                  <Small aria-label="左对齐"><Rows xs={[[1, 15], [1, 11], [1, 15], [1, 11], [1, 15]]} y={-1} /></Small>
                  <Small aria-label="居中" $w={27}><Rows xs={[[1, 15], [3, 13], [1, 15], [3, 13], [1, 15]]} y={-1} /></Small>
                  <Small aria-label="右对齐"><Rows xs={[[1, 15], [5, 15], [1, 15], [5, 15], [1, 15]]} y={-1} /></Small>
                </Cluster>
                <Cluster>
                  <Small aria-label="减少缩进" $w={26}><IndentIcon out /></Small>
                  <Small aria-label="增加缩进" $w={25}><IndentIcon /></Small>
                </Cluster>
              </Line>
            </Stack>
            <Divider />
            <Stack $gap={13}>
              <TextButton><WrapIcon />自动换行</TextButton>
              <TextButton><MergeIcon />合并后居中<Caret /></TextButton>
            </Stack>
          </GroupBody>
          <Foot name="对齐方式" launcher />
        </Group>

        <Group $w={157}>
          <GroupBody $column $gap={12} $pad="12px 3px 0">
            <Picker label="数字格式" value="常规" w={148} />
            <Line $gap={3}>
              <Cluster>
                <Small aria-label="会计数字格式" $w={39}><MoneyIcon /><Caret /></Small>
                <Small aria-label="百分比样式"><Glyph $size={13}>%</Glyph></Small>
                <Small aria-label="千位分隔样式"><Glyph $size={20} $raised>,</Glyph></Small>
              </Cluster>
              <Cluster>
                <Small aria-label="增加小数位数"><DecimalIcon more /></Small>
                <Small aria-label="减少小数位数" $w={25}><DecimalIcon /></Small>
              </Cluster>
            </Line>
          </GroupBody>
          <Foot name="数字" launcher />
        </Group>

        <Group $w={198}>
          <GroupBody $pad="7px 2px 0">
            <BigButton icon={<CondIcon />} top="条件格式" w={66} />
            <BigButton icon={<TableStyleIcon />} top="套用" bottom="表格格式" w={74} />
            <BigButton icon={<CellStyleIcon />} top="单元格" bottom="样式" w={50} />
          </GroupBody>
          <Foot name="样式" />
        </Group>

        <Group $w={158}>
          <GroupBody $pad="7px 2px 0">
            <BigButton icon={<InsertIcon />} top="插入" w={50} />
            <BigButton icon={<DeleteIcon />} top="删除" w={50} />
            <BigButton icon={<FormatIcon />} top="格式" w={50} />
          </GroupBody>
          <Foot name="单元格" />
        </Group>

        <Group $w={208}>
          <GroupBody $pad="0 2px 0 9px">
            <Stack>
              <TextButton><SigmaIcon />自动求和<Caret /></TextButton>
              <TextButton><FillDownIcon />填充<Caret /></TextButton>
              <TextButton><EraserIcon />清除<Caret /></TextButton>
            </Stack>
            <GroupBody $pad="7px 0 0 3px">
              <BigButton icon={<SortIcon />} top="排序和" bottom="筛选" w={50} />
              <BigButton icon={<BinocularsIcon />} top="查找和" bottom="选择" w={50} />
            </GroupBody>
          </GroupBody>
          <Foot name="编辑" />
        </Group>
      </Ribbon>

      <FormulaBar>
        <NameBox aria-label="名称框" defaultValue="A4" />
        <NameArrow aria-label="名称列表"><svg width="9" height="5"><path d="M0 0h9L4.500 5z" fill="#000" /></svg></NameArrow>
        <FxPill aria-label="插入函数">
          <svg width="10" height="10"><circle cx="5" cy="5" r="4.500" fill="#a9bcd6" /><path d="M1 4a4 4 0 0 0 5 5z" fill="#fff" /></svg>
          <span>f<small>x</small></span>
        </FxPill>
        <FormulaInput aria-label="编辑栏" />
        <Expand aria-label="展开编辑栏"><svg width="12" height="12"><path d="M3 1l4 4 4-4M3 6l4 4 4-4" fill="none" stroke="#000" strokeWidth="2" /></svg></Expand>
      </FormulaBar>

      <Workspace>
        <GridClip>
          <Grid>
            <colgroup>
              <col style={{ width: 32 }} /><col style={{ width: 799 }} /><col style={{ width: 85 }} />
              {[0, 1, 2, 3, 4].map((i) => <col key={i} style={{ width: 80 }} />)}
              <col />
            </colgroup>
            <thead>
              <tr>
                <Corner scope="col"><svg width="12" height="14"><path d="M11 0v10H0z" fill="#fdfdff" /><path d="M1 10h10v2H0z" fill={mid} /></svg></Corner>
                {columns.map((c, i) => <ColHead key={i} scope="col">{c}</ColHead>)}
              </tr>
            </thead>
            <tbody>
              {Array.from({ length: 16 }, (_, i) => i + 1).map((n) => (
                <tr key={n} style={{ height: heights[n] ?? 24 }}>
                  <RowHead scope="row">{n}</RowHead>
                  <Cell>{data[n]?.[0]}</Cell>
                  <Cell $right>{data[n]?.[1]}</Cell>
                  {columns.slice(2).map((_, k) => <Cell key={k} />)}
                </tr>
              ))}
            </tbody>
          </Grid>
        </GridClip>
        <VScroll>
          <VSplit />
          <ScrollArrow aria-label="向上" $h={22}><svg width="10" height="6"><path d="M0 6L6 0l6 6z" fill="#3d4766" /></svg></ScrollArrow>
          <VThumb><svg width="9" height="8"><path d="M4 .5h6M4 2.500h6M4 4.500h6M4 6.500h6" stroke="#5f6f88" /></svg></VThumb>
          <VFiller />
          <ScrollArrow aria-label="向下"><svg width="10" height="6"><path d="M2 0h10L8 6z" fill="#4b3f80" /></svg></ScrollArrow>
        </VScroll>
        <Pointer width="13" height="20"><path d="M1.500 1v16l3.800-3.500 3 6 2.500-1.200-2.800-5.800h5z" fill="#fff" stroke="#1c2142" /></Pointer>
      </Workspace>

      <BottomBar>
        <SheetNav>
          <button aria-label="第一张"><Triangle dir="l" bar /></button>
          <button aria-label="上一张"><Triangle dir="l" /></button>
          <button aria-label="下一张"><Triangle dir="r" /></button>
          <button aria-label="最后一张"><Triangle dir="r" bar /></button>
        </SheetNav>
        <SheetTab $on $w={84}>Sheet1</SheetTab>
        <SheetTab>Sheet2</SheetTab>
        <SheetTab>Sheet3</SheetTab>
        <SheetTab aria-label="插入工作表" $w={48}>
          <svg width="20" height="16"><path d="M5 3h12v9l-3 3H5z" fill="#f2f6fc" stroke="#5f77a3" /><path d="M4 0v8M0 4h8M1 1l6 6M7 1L1 7" stroke="#e08a1c" /></svg>
        </SheetTab>
        <HScroll>
          <Splitter />
          <HTrack>
            <ScrollArrow aria-label="向左" $w={22}><svg width="7" height="12"><path d="M7 0v12L0 6z" fill="#4a4668" /></svg></ScrollArrow>
            <HThumb><i /><i /><i /><i /></HThumb>
          </HTrack>
          <ScrollArrow aria-label="向右" $w={22}><svg width="7" height="12"><path d="M0 0v12l7-6z" fill="#3a3458" /></svg></ScrollArrow>
          <Splitter />
          <ScrollArrow as="span" $w={10} />
        </HScroll>
      </BottomBar>
    </Window>
  );
}
